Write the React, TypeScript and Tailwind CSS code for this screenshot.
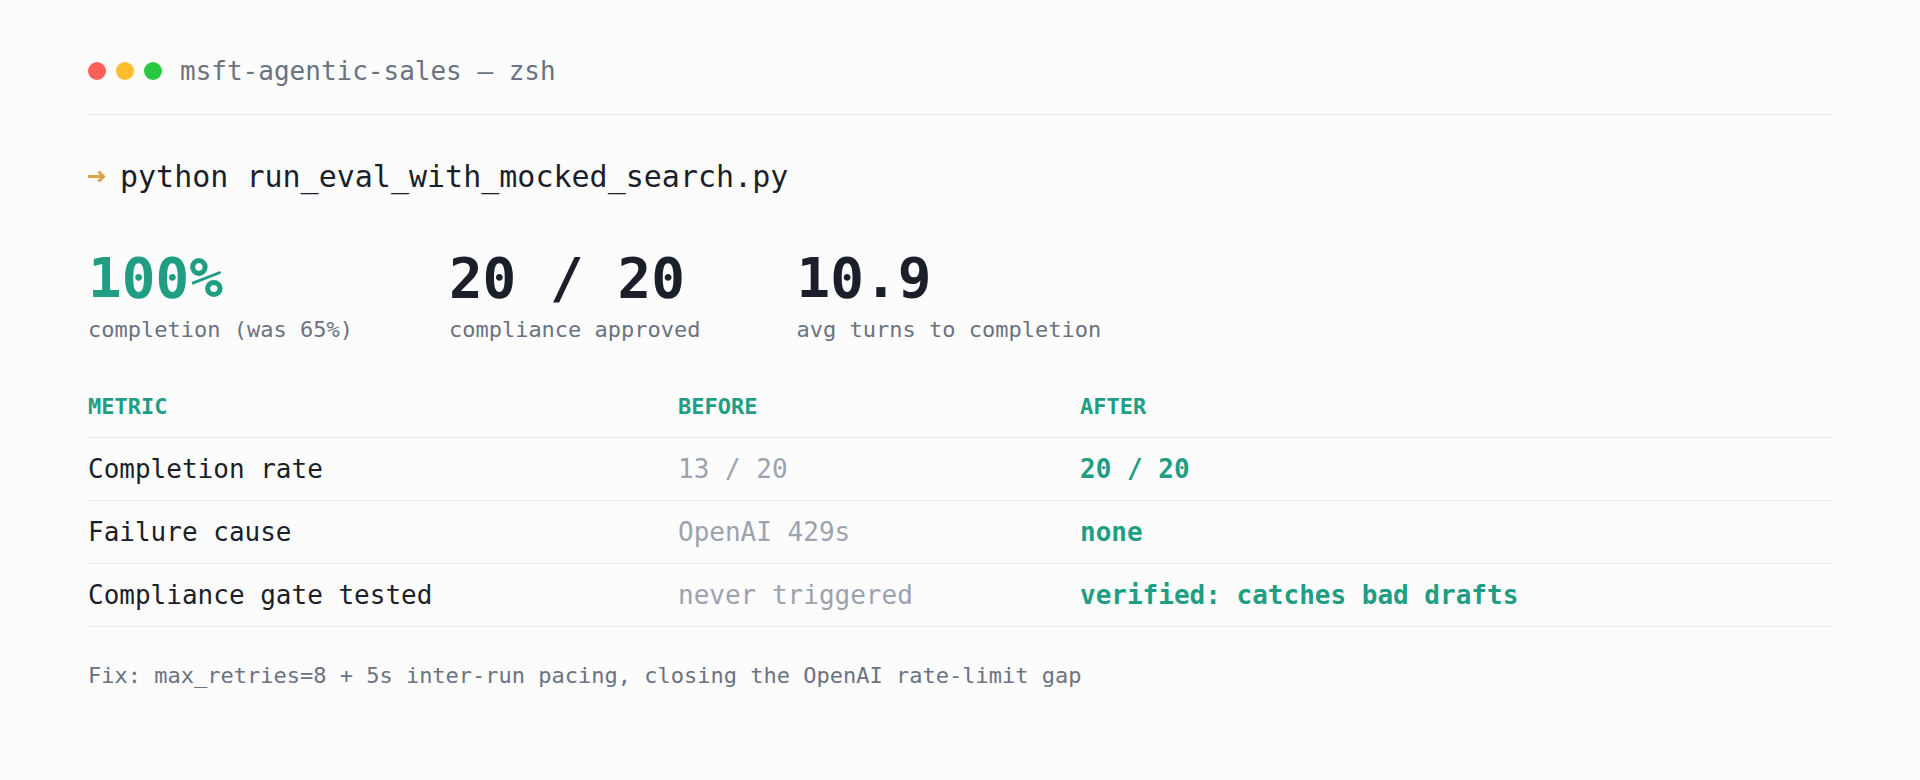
const rows = [
  { metric: "Completion rate", before: "13 / 20", after: "20 / 20" },
  { metric: "Failure cause", before: "OpenAI 429s", after: "none" },
  { metric: "Compliance gate tested", before: "never triggered", after: "verified: catches bad drafts" },
];

const stats = [
  { value: "100%", label: "completion (was 65%)", accent: true },
  { value: "20 / 20", label: "compliance approved", accent: false },
  { value: "10.9", label: "avg turns to completion", accent: false },
];

export default function App() {
  return (
    <div className="min-h-screen bg-[#fcfcfc] px-[88px] font-['DejaVu_Sans_Mono',monospace] text-[#1b1f2a]">
      {/* window title */}
      <div className="pt-[53px] pb-[25px] border-b border-[#e6e4df]">
        <div className="flex items-center h-9">
          <span className="w-[18px] h-[18px] rounded-full bg-[#ff5f57]"></span>
          <span className="w-[18px] h-[18px] rounded-full bg-[#febc2e] ml-[10px]"></span>
          <span className="w-[18px] h-[18px] rounded-full bg-[#28c840] ml-[10px]"></span>
          <span className="ml-[18px] text-[26px] text-[#6b7280]">msft-agentic-sales — zsh</span>
        </div>
      </div>

      {/* command */}
      <div className="mt-[43px] flex items-center h-9 text-[30px]">
        <span className="w-[32px] flex items-center">
          <svg width="18" height="12" viewBox="0 0 18 12" fill="none" stroke="#d9a54a" strokeWidth="3" strokeLinecap="butt">
            <path d="M0 6.5h15" />
            <path d="M10.5 1.5l5 5-5 5" />
          </svg>
        </span>
        <span>python run_eval_with_mocked_search.py</span>
      </div>

      {/* headline stats */}
      <div className="mt-[56px] flex gap-24">
        {stats.map((s) => (
          <div key={s.label} className="flex flex-col">
            <span className={`text-[56px] leading-none font-bold ${s.accent ? "text-[#1f9e84]" : "text-[#1b1f2a]"}`}>
              {s.value}
            </span>
            <span className="mt-[7px] text-[22px] leading-[33px] text-[#6b7280]">{s.label}</span>
          </div>
        ))}
      </div>

      {/* before / after table */}
      <div className="mt-[44px]">
        <div className="grid grid-cols-[590px_402px_1fr] pb-[14px] border-b border-[#e5e7eb] text-[22px] leading-[33px] font-bold text-[#1f9e84]">
          <span>METRIC</span>
          <span>BEFORE</span>
          <span>AFTER</span>
        </div>
        {rows.map((r) => (
          <div
            key={r.metric}
            className="grid grid-cols-[590px_402px_1fr] items-center h-[63px] border-b border-[#ececec] text-[26px] leading-[39px]"
          >
            <span>{r.metric}</span>
            <span className="text-[#9ca3af]">{r.before}</span>
            <span className="font-bold text-[#1f9e84]">{r.after}</span>
          </div>
        ))}
      </div>

      <p className="mt-[32px] text-[22px] leading-[33px] text-[#6b7280]">
        Fix: max_retries=8 + 5s inter-run pacing, closing the OpenAI rate-limit gap
      </p>
    </div>
  );
}
